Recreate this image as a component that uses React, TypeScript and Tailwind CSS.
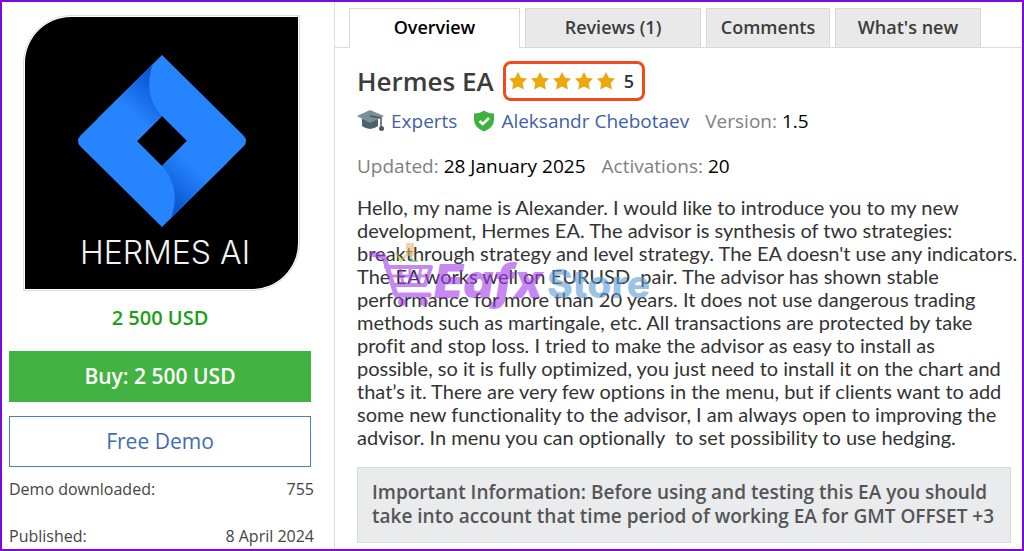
import { useState } from "react";
import clsx from "clsx";

const tabs = [
  { id: "overview", label: "Overview", width: "w-[171px]" },
  { id: "reviews", label: "Reviews (1)", width: "w-[176px]" },
  { id: "comments", label: "Comments", width: "w-[124px]" },
  { id: "news", label: "What's new", width: "w-[146px]" },
];

const description = [
  "Hello, my name is Alexander. I would like to introduce you to my new",
  "development, Hermes EA. The advisor is synthesis of two strategies:",
  "breakthrough strategy and level strategy. The EA doesn't use any indicators.",
  "The EA works well on EURUSD  pair. The advisor has shown stable",
  "performance for more than 20 years. It does not use dangerous trading",
  "methods such as martingale, etc. All transactions are protected by take",
  "profit and stop loss. I tried to make the advisor as easy to install as",
  "possible, so it is fully optimized, you just need to install it on the chart and",
  "that’s it. There are very few options in the menu, but if clients want to add",
  "some new functionality to the advisor, I am always open to improving the",
  "advisor. In menu you can optionally  to set possibility to use hedging.",
];

function ProductLogo() {
  return (
    <div className="rounded-tl-[48px] rounded-br-[48px] border border-[#dcdcdc] p-px">
      <svg
        viewBox="0 0 273 272"
        className="block w-full rounded-tl-[46px] rounded-br-[46px] bg-black"
        role="img"
        aria-label="Hermes AI"
      >
        <defs>
          <linearGradient id="foldTop" gradientUnits="userSpaceOnUse" x1="128" y1="58" x2="99" y2="90">
            <stop offset="0" stopColor="#0a55cf" />
            <stop offset="1" stopColor="#2684ff" />
          </linearGradient>
          <linearGradient id="foldBottom" gradientUnits="userSpaceOnUse" x1="146" y1="188" x2="175" y2="156">
            <stop offset="0" stopColor="#0a55cf" />
            <stop offset="1" stopColor="#2684ff" />
          </linearGradient>
        </defs>
        <path d="M137 38 L55 119 Q51 124 55 129 L137 210 L219 129 Q223 124 219 119 Z M137 99 L162 124 L137 149 L112 124 Z" fill="#2684ff" fillRule="evenodd" />
        <path d="M128 47 C122 63 122 83 137 99 L112 124 L72 102 Z" fill="url(#foldTop)" />
        <path d="M146 201 C152 185 152 165 137 149 L162 124 L202 146 Z" fill="url(#foldBottom)" />
        <text x="140" y="247" textAnchor="middle" fill="#f2f2f2" fontSize="32" className="font-['Inter',sans-serif] font-light">
          HERMES AI
        </text>
      </svg>
    </div>
  );
}

function Star() {
  return (
    <svg viewBox="0 0 20 20" className="size-5" fill="#eda80d" aria-hidden="true">
      <path d="M10 1 L12.9 6.700 L19 7.500 L14.700 12 L15.900 18.500 L10 15.600 L4.100 18.500 L5.300 12 L1 7.500 L7.100 6.700 Z" />
    </svg>
  );
}

function CapIcon() {
  return (
    <svg viewBox="0 0 28 24" className="h-6 w-7" aria-hidden="true">
      <path d="M5 10 V17 Q13 23 21 17 V10 Z" fill="#4d626c" />
      <path d="M0 7 L13 1 L27 7 L13 14 Z" fill="#78909c" />
      <path d="M13 7 L24 9 V17" fill="none" stroke="#455a64" strokeWidth="1.5" />
      <circle cx="24.5" cy="19.5" r="2.5" fill="#455a64" />
    </svg>
  );
}

function ShieldIcon() {
  return (
    <svg viewBox="0 0 22 22" className="size-[22px]" aria-hidden="true">
      <path d="M11 0.5 Q15 3.5 21 3.5 V10 Q20.500 18 11 21.5 Q1.500 18 1 10 V3.5 Q7 3.500 11 0.5 Z" fill="#3db33d" />
      <path d="M6.500 11 L9.800 14 L16 8" fill="none" stroke="#fff" strokeWidth="2.500" />
    </svg>
  );
}

function Watermark() {
  return (
    <svg
      viewBox="0 0 300 84"
      className="pointer-events-none absolute top-[43px] left-[11px] h-[84px] w-[300px] opacity-60"
      aria-hidden="true"
    >
      <rect x="38" y="4" width="8" height="13" rx="1" fill="#f5b173" />
      <path d="M28 14 L33 22 L40 14" fill="none" stroke="#c3c92f" strokeWidth="2" />
      <path d="M43 14 V22 H50" fill="none" stroke="#5fb870" strokeWidth="2" />
      <g fill="none" stroke="#a03be8" strokeLinecap="round" strokeLinejoin="round">
        <path d="M4 15 L16 18 L28 56 H61" strokeWidth="5" />
        <path d="M18 28 H63 L57 46 H25" strokeWidth="4" />
        <path d="M22 37 H60 M32 28 L35 46 M42 28 V46 M53 28 L50 46" strokeWidth="3" />
      </g>
      <circle cx="34" cy="63" r="4" fill="#a03be8" />
      <circle cx="56" cy="63" r="4" fill="#a03be8" />
      <text x="66" y="59" fontSize="47" fill="#a03be8" className="font-['Inter',sans-serif] font-black italic">
        Eafx
      </text>
      <text x="179" y="59" fontSize="39" fill="#5b9bd5" className="font-['Inter',sans-serif] font-extrabold">
        Store
      </text>
    </svg>
  );
}

export default function App() {
  const [active, setActive] = useState("overview");

  return (
    <div className="flex min-h-screen border-2 border-[#7a0bd8] bg-white font-['Open_Sans','Noto_Sans',sans-serif] text-[#333]">
      <aside className="w-[333px] shrink-0 border-r border-[#dedede] pt-[13px] pl-[7px]">
        <div className="mr-[34px] ml-[14px]">
          <ProductLogo />
        </div>
        <p className="mt-[13px] mr-[23px] text-center text-xl leading-7 font-semibold text-[#18a018]">2 500 USD</p>
        <div className="mt-[19px] mr-[23px] flex flex-col gap-[14px]">
          <button className="h-[51px] bg-[#42b342] text-[21px] font-semibold text-white">Buy: 2 500 USD</button>
          <button className="h-[51px] border border-[#4a7fbf] text-[21px] text-[#3d6cb4]">Free Demo</button>
        </div>
        <dl className="mt-[10px] mr-5 flex flex-col gap-[23px] text-base leading-6 text-[#444]">
          <div className="flex justify-between">
            <dt>Demo downloaded:</dt>
            <dd>755</dd>
          </div>
          <div className="flex justify-between">
            <dt>Published:</dt>
            <dd>8 April 2024</dd>
          </div>
        </dl>
      </aside>

      <main className="min-w-0 flex-1 pt-[6px]">
        <div role="tablist" className="flex gap-[5px] border-b border-[#dcdcdc] pl-[14px]">
          {tabs.map((tab) => (
            <button
              key={tab.id}
              role="tab"
              aria-selected={active === tab.id}
              onClick={() => setActive(tab.id)}
              className={clsx(
                "-mb-px h-10 border border-[#d8dada] pb-[2px] text-lg font-semibold",
                tab.width,
                active === tab.id ? "border-b-white bg-white text-black" : "bg-[#e9e9e9] text-[#3c3c3c]"
              )}
            >
              {tab.label}
            </button>
          ))}
        </div>

        <div className="pr-[11px] pl-[22px]">
          <div className="mt-[13px] flex items-center gap-[9px]">
            <h1 className="text-[26px] leading-9 font-semibold text-[#3c3c3c]">Hermes EA</h1>
            <div className="flex h-10 items-center rounded-lg border-3 border-[#f04a1d] pr-2 pl-[2px]">
              <div className="flex gap-[2px]">
                {[1, 2, 3, 4, 5].map((n) => (
                  <Star key={n} />
                ))}
              </div>
              <span className="ml-2 text-lg font-semibold">5</span>
            </div>
          </div>

          <div className="mt-[6px] flex items-center gap-4 text-[19px] leading-7">
            <a href="#experts" className="flex items-center gap-[6px] text-[#3f5fa8]">
              <CapIcon />
              Experts
            </a>
            <a href="#author" className="flex items-center gap-[6px] text-[#3f5fa8]">
              <ShieldIcon />
              Aleksandr Chebotaev
            </a>
            <span className="text-[#808080]">
              Version: <b className="font-medium text-black">1.5</b>
            </span>
          </div>
          <div className="mt-[17px] flex gap-4 text-[19px] leading-7 text-[#808080]">
            <span>
              Updated: <b className="font-medium text-black">28 January 2025</b>
            </span>
            <span>
              Activations: <b className="font-medium text-black">20</b>
            </span>
          </div>

          <div className="relative -mr-[10px] mt-4">
            <p className="font-['Lato',sans-serif] text-xl leading-[23px] whitespace-pre-wrap [font-variant-ligatures:none]">
              {description.join("\n")}
            </p>
            <Watermark />
          </div>

          <div className="mt-[18px] border border-[#d6dada] bg-[#e9ebec] px-[14px] pt-3 pb-[14px] text-[19px] leading-6 font-semibold text-[#555]">
            Important Information: Before using and testing this EA you should
            <br />
            take into account that time period of working EA for GMT OFFSET +3
          </div>
        </div>
      </main>
    </div>
  );
}
